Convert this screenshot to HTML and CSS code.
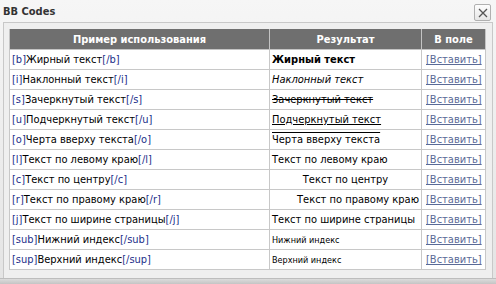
FILE: index.html
```html
<!DOCTYPE html>
<html>
<head>
<meta charset="utf-8">
<link rel="stylesheet" href="styles.css">
</head>
<body>
<div class="dialog">
  <div class="titlebar">
    <span class="title">BB Codes</span>
    <span class="close"><svg width="10" height="10" viewBox="0 0 10 10"><path d="M1 1L9 9M9 1L1 9" stroke="#555" stroke-width="1.3"/></svg></span>
  </div>
  <div class="body">
    <table class="codes">
      <colgroup><col class="w1"><col class="w2"><col class="w3"></colgroup>
      <thead>
        <tr><th>Пример использования</th><th>Результат</th><th>В поле</th></tr>
      </thead>
      <tbody>
        <tr><td><span class="tag">[b]</span>Жирный текст<span class="tag">[/b]</span></td><td><b>Жирный текст</b></td><td><a href="#">[Вставить]</a></td></tr>
        <tr><td><span class="tag">[i]</span>Наклонный текст<span class="tag">[/i]</span></td><td><i>Наклонный текст</i></td><td><a href="#">[Вставить]</a></td></tr>
        <tr><td><span class="tag">[s]</span>Зачеркнутый текст<span class="tag">[/s]</span></td><td><s>Зачеркнутый текст</s></td><td><a href="#">[Вставить]</a></td></tr>
        <tr><td><span class="tag">[u]</span>Подчеркнутый текст<span class="tag">[/u]</span></td><td><u>Подчеркнутый текст</u></td><td><a href="#">[Вставить]</a></td></tr>
        <tr><td><span class="tag">[o]</span>Черта вверху текста<span class="tag">[/o]</span></td><td><span class="over">Черта вверху текста</span></td><td><a href="#">[Вставить]</a></td></tr>
        <tr><td><span class="tag">[l]</span>Текст по левому краю<span class="tag">[/l]</span></td><td class="left">Текст по левому краю</td><td><a href="#">[Вставить]</a></td></tr>
        <tr><td><span class="tag">[c]</span>Текст по центру<span class="tag">[/c]</span></td><td class="center">Текст по центру</td><td><a href="#">[Вставить]</a></td></tr>
        <tr><td><span class="tag">[r]</span>Текст по правому краю<span class="tag">[/r]</span></td><td class="right">Текст по правому краю</td><td><a href="#">[Вставить]</a></td></tr>
        <tr><td><span class="tag">[j]</span>Текст по ширине страницы<span class="tag">[/j]</span></td><td class="justify">Текст по ширине страницы</td><td><a href="#">[Вставить]</a></td></tr>
        <tr><td><span class="tag">[sub]</span>Нижний индекс<span class="tag">[/sub]</span></td><td><span class="small">Нижний индекс</span></td><td><a href="#">[Вставить]</a></td></tr>
        <tr><td><span class="tag">[sup]</span>Верхний индекс<span class="tag">[/sup]</span></td><td><span class="small">Верхний индекс</span></td><td><a href="#">[Вставить]</a></td></tr>
      </tbody>
    </table>
  </div>
  <div class="footer"></div>
</div>
</body>
</html>
```
FILE: styles.css
```css
html, body {
  margin: 0;
  padding: 0;
  width: 496px;
  height: 284px;
  overflow: hidden;
  background: #e6e6e6;
  font-family: "DejaVu Sans Condensed", "DejaVu Sans", sans-serif;
  font-stretch: condensed;
}
.dialog {
  width: 496px;
  height: 284px;
  display: flex;
  flex-direction: column;
  background: linear-gradient(#f6f6f6, #e4e4e4);
}
.titlebar {
  height: 22px;
  flex: none;
  display: flex;
  align-items: center;
  justify-content: space-between;
  padding: 0 5px 0 3px;
}
.title {
  font-weight: bold;
  font-size: 11px;
  color: #333;
}
.close {
  width: 15px;
  height: 15px;
  border: 1px solid #b0b0b0;
  border-radius: 2px;
  background: linear-gradient(#fdfdfd, #e6e6e6);
  display: flex;
  align-items: center;
  justify-content: center;
  margin-top: 3px;
}
.body {
  flex: none;
  margin: 0 3px 0 3px;
  border: 1px solid #c8c8c8;
  border-bottom: none;
  background: #efefef;
  padding: 6px 7px 0 5px;
  height: 249px;
}
.footer {
  flex: 1;
  background: linear-gradient(#dcdcdc, #c4c4c4);
  border-top: 1px solid #bdbdbd;
}
.codes {
  border-collapse: collapse;
  table-layout: fixed;
  width: 476px;
  font-size: 11px;
  background: #fff;
}
.w1 { width: 260px; }
.w2 { width: 152px; }
.w3 { width: 64px; }
.codes th {
  background: #6f6f6f;
  color: #fff;
  font-weight: bold;
  height: 20px;
  padding: 0;
  font-size: 11px;
  border: 1px solid #c4c4c4;
  border-top: none;
}
.codes td {
  height: 19px;
  padding: 0 2px;
  border: 1px solid #c8c8c8;
  color: #000;
  white-space: nowrap;
  overflow: hidden;
}
.tag { color: #1c2f8a; }
.codes td.left { text-align: left; }
.codes td.center { text-align: center; }
.codes td.right { text-align: right; }
.codes td.justify { text-align: justify; }
.over { text-decoration: overline; }
.small { font-size: 9px; }
.codes a {
  color: #5a6a96;
  text-decoration: underline;
  padding-left: 2px;
}
```
